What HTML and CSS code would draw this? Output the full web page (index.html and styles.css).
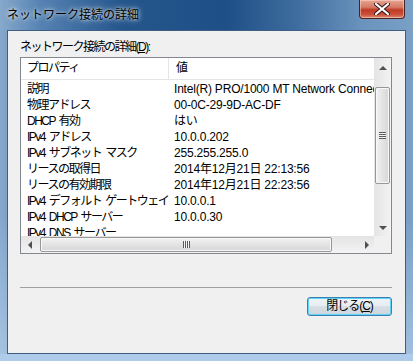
FILE: index.html
```html
<!DOCTYPE html>
<html lang="ja">
<head>
    <meta charset="UTF-8">
    <title>ネットワーク接続の詳細</title>
    <link rel="stylesheet" href="styles.css">
</head>
<body>
    <div class="window">
        <div class="titlebar">
            <span class="title">ネットワーク接続の詳細</span>
            <div class="close-btn">
                <svg width="16" height="12" viewBox="0 0 16 12">
                    <path d="M2 1 L14 11 M14 1 L2 11" stroke="#3a1d1d" stroke-width="4.2" stroke-linecap="round"/>
                    <path d="M2 1 L14 11 M14 1 L2 11" stroke="#ffffff" stroke-width="2.2" stroke-linecap="round"/>
                </svg>
            </div>
        </div>
        <div class="client">
            <div class="label">ネットワーク接続の詳細(<u>D</u>):</div>
            <div class="listbox">
                <div class="list-view">
                    <div class="list-header">
                        <div class="col-name">プロパティ</div>
                        <div class="col-value">値</div>
                    </div>
                    <div class="list-rows">
                        <div class="row"><span class="col-name">説明</span><span class="col-value">Intel(R) PRO/1000 MT Network Connection</span></div>
                        <div class="row"><span class="col-name">物理アドレス</span><span class="col-value">00-0C-29-9D-AC-DF</span></div>
                        <div class="row"><span class="col-name">DHCP 有効</span><span class="col-value">はい</span></div>
                        <div class="row"><span class="col-name">IPv4 アドレス</span><span class="col-value">10.0.0.202</span></div>
                        <div class="row"><span class="col-name">IPv4 サブネット マスク</span><span class="col-value">255.255.255.0</span></div>
                        <div class="row"><span class="col-name">リースの取得日</span><span class="col-value">2014年12月21日 22:13:56</span></div>
                        <div class="row"><span class="col-name">リースの有効期限</span><span class="col-value">2014年12月21日 22:23:56</span></div>
                        <div class="row"><span class="col-name">IPv4 デフォルト ゲートウェイ</span><span class="col-value">10.0.0.1</span></div>
                        <div class="row"><span class="col-name">IPv4 DHCP サーバー</span><span class="col-value">10.0.0.30</span></div>
                        <div class="row"><span class="col-name">IPv4 DNS サーバー</span><span class="col-value"></span></div>
                    </div>
                </div>
                <div class="vscroll">
                    <div class="arrow arrow-up"></div>
                    <div class="track-before"></div>
                    <div class="thumb thumb-v"><span class="grip"></span></div>
                    <div class="track-rest"></div>
                    <div class="arrow arrow-down"></div>
                </div>
                <div class="hscroll">
                    <div class="arrow arrow-left"></div>
                    <div class="track-before"></div>
                    <div class="thumb thumb-h"><span class="grip"></span></div>
                    <div class="track-rest"></div>
                    <div class="arrow arrow-right"></div>
                </div>
                <div class="corner"></div>
            </div>
            <div class="separator"></div>
            <div class="actions">
                <button class="btn-close">閉じる(<u>C</u>)</button>
            </div>
        </div>
    </div>
</body>
</html>
```

FILE: styles.css
```css
body {
    margin: 0;
    font-family: "Liberation Sans", "Noto Sans CJK JP", sans-serif;
    font-size: 12px;
    color: #000;
}
.window {
    width: 413px;
    height: 361px;
    box-sizing: border-box;
    display: flex;
    flex-direction: column;
    padding: 0 7px 7px 7px;
    background:
        linear-gradient(to top, #aecbea 0, #aecbea 7px, transparent 7px),
        linear-gradient(to bottom, rgba(255,255,255,0) 60%, rgba(190,215,240,0.6) 100%),
        linear-gradient(90deg, #86a9cc 0%, #5582b2 10%, #24558b 30%, #1e4f86 55%, #3f6d9f 72%, #6b93bd 88%, #7aa0c6 100%);
}
.titlebar {
    height: 30px;
    display: flex;
    justify-content: space-between;
    align-items: flex-start;
}
.title {
    font-family: "Noto Sans CJK JP", sans-serif;
    font-size: 12px;
    line-height: 16px;
    margin-top: 6px;
    text-shadow: 0 0 6px rgba(255,255,255,0.9), 0 0 3px rgba(255,255,255,0.7);
}
.close-btn {
    width: 44px;
    height: 18px;
    margin-right: 1px;
    border: 1px solid #4a2424;
    border-top: none;
    border-radius: 0 0 4px 4px;
    background: linear-gradient(to bottom, #e7a592 0%, #d57a66 40%, #bf3a24 55%, #c9503a 80%, #de8a73 100%);
    box-shadow: inset 0 0 0 1px rgba(255,220,210,0.5);
    display: flex;
    align-items: center;
    justify-content: center;
}
.client {
    flex: 1;
    background: #f0f0f0;
    border: 1px solid #3f5f82;
    padding: 0 13px 0 12px;
    display: flex;
    flex-direction: column;
}
.label {
    padding-top: 8px;
    line-height: 16px;
    letter-spacing: -1.5px;
}
.listbox {
    margin-top: 2px;
    height: 197px;
    box-sizing: border-box;
    border: 1px solid #828790;
    background: #fff;
    display: grid;
    grid-template-columns: 1fr 17px;
    grid-template-rows: 1fr 17px;
}
.list-view {
    overflow: hidden;
    white-space: nowrap;
}
.list-header {
    height: 22px;
    box-sizing: border-box;
    border-bottom: 1px solid #e5e5e5;
    display: flex;
    align-items: stretch;
    line-height: 21px;
}
.list-header .col-name {
    width: 148px;
    box-sizing: border-box;
    padding-left: 6px;
    border-right: 1px solid #e5e5e5;
    letter-spacing: -1.5px;
}
.list-header .col-value {
    padding-left: 7px;
}
.list-rows {
    padding-top: 1px;
}
.row {
    display: flex;
    height: 16px;
    line-height: 16px;
}
.row .col-name {
    width: 148px;
    flex: none;
    box-sizing: border-box;
    padding-left: 6px;
    letter-spacing: -1.5px;
    word-spacing: 2px;
}
.row .col-value {
    padding-left: 5px;
    letter-spacing: -0.2px;
}
.vscroll {
    display: flex;
    flex-direction: column;
    background: linear-gradient(90deg, #e4e4e4, #f3f3f3);
}
.hscroll {
    display: flex;
    background: linear-gradient(to bottom, #e4e4e4, #f3f3f3);
}
.corner {
    background: #f0f0f0;
}
.arrow {
    width: 17px;
    height: 17px;
    flex: none;
    position: relative;
}
.arrow::after {
    content: "";
    position: absolute;
    left: 5px;
    top: 6px;
    border: 4px solid transparent;
}
.arrow-up::after {
    top: 4px;
    border-bottom: 4px solid #4f4f4f;
}
.arrow-down::after {
    top: 7px;
    border-top: 4px solid #4f4f4f;
}
.arrow-left::after {
    left: 3px;
    top: 5px;
    border-right: 4px solid #4f4f4f;
}
.arrow-right::after {
    left: 8px;
    top: 5px;
    border-left: 4px solid #4f4f4f;
}
.vscroll .track-before {
    height: 12px;
}
.hscroll .track-before {
    width: 2px;
}
.track-rest {
    flex: 1;
}
.thumb {
    box-sizing: border-box;
    border: 1px solid #979797;
    border-radius: 2px;
    box-shadow: inset 0 0 0 1px #f8f8f8;
    display: flex;
    align-items: center;
    justify-content: center;
}
.thumb-v {
    height: 97px;
    margin: 0 1px;
    background: linear-gradient(90deg, #f2f2f2, #e4e4e4 50%, #d6d6d6);
}
.thumb-h {
    width: 292px;
    margin: 1px 0;
    background: linear-gradient(to bottom, #f2f2f2, #e4e4e4 50%, #d6d6d6);
}
.grip {
    display: block;
}
.thumb-v .grip {
    width: 7px;
    height: 7px;
    background: repeating-linear-gradient(to bottom, #5c5c5c 0, #5c5c5c 1px, #f3f3f3 1px, #f3f3f3 2px);
}
.thumb-h .grip {
    width: 7px;
    height: 7px;
    background: repeating-linear-gradient(90deg, #5c5c5c 0, #5c5c5c 1px, #f3f3f3 1px, #f3f3f3 2px);
}
.separator {
    margin-top: 33px;
    border-top: 1px solid #a0a0a0;
}
.actions {
    margin-top: 9px;
    display: flex;
    justify-content: flex-end;
}
.btn-close {
    width: 85px;
    height: 19px;
    padding: 0;
    font-family: "Liberation Sans", "Noto Sans CJK JP", sans-serif;
    font-size: 12px;
    line-height: 15px;
    letter-spacing: -1px;
    color: #000;
    border: 1px solid #3c7fb1;
    border-radius: 3px;
    box-shadow: inset 0 0 0 1px #5fd3f7;
    background: linear-gradient(to bottom, #eef3f6 0%, #e6ecf0 50%, #d8e0e6 50%, #cbd5dc 100%);
}
```
